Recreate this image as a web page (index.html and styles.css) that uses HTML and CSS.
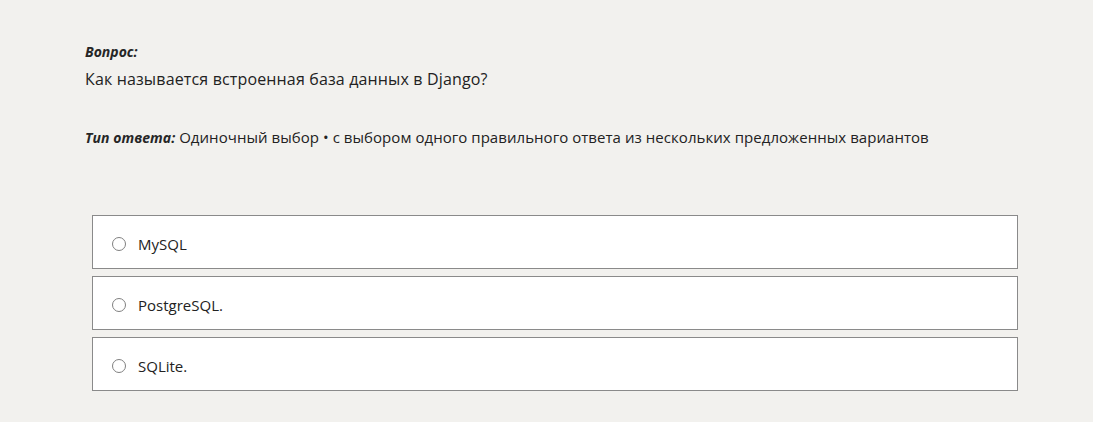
FILE: index.html
```html
<!DOCTYPE html>
<html lang="ru">
<head>
<meta charset="utf-8">
<link rel="stylesheet" href="styles.css">
</head>
<body>
<div class="page">
  <div class="question">
    <div class="label">Вопрос:</div>
    <div class="qtext">Как называется встроенная база данных в Django?</div>
  </div>
  <div class="type"><span class="label">Тип ответа:</span> Одиночный выбор • с выбором одного правильного ответа из нескольких предложенных вариантов</div>
  <div class="options">
    <label class="option"><span class="radio"></span><span class="otext">MySQL</span></label>
    <label class="option"><span class="radio"></span><span class="otext">PostgreSQL.</span></label>
    <label class="option"><span class="radio"></span><span class="otext">SQLite.</span></label>
  </div>
</div>
</body>
</html>
```
FILE: styles.css
```css
html, body {
  margin: 0;
  padding: 0;
  background: #f2f1ee;
}
body {
  font-family: "Open Sans", "Noto Sans", sans-serif;
  color: #222;
}
.page {
  padding: 42px 0 0 85px;
}
.label {
  font-weight: 700;
  font-style: italic;
  font-size: 14px;
  color: #262626;
}
.question .label {
  line-height: 20px;
}
.qtext {
  margin-top: 6px;
  font-size: 16px;
  letter-spacing: 0.15px;
  line-height: 22px;
}
.type {
  margin-top: 37px;
  font-size: 15px;
  letter-spacing: 0.05px;
  line-height: 20px;
}
.options {
  margin: 67px 0 0 7px;
  width: 926px;
  display: flex;
  flex-direction: column;
  gap: 7px;
}
.option {
  box-sizing: border-box;
  display: flex;
  align-items: center;
  height: 54px;
  background: #fff;
  border: 1px solid #8a8a8a;
  padding: 4px 0 0 19px;
}
.radio {
  box-sizing: border-box;
  width: 14px;
  height: 14px;
  border: 1.5px solid #808080;
  border-radius: 50%;
  margin-right: 12px;
}
.otext {
  font-size: 15px;
  color: #222;
}
```
